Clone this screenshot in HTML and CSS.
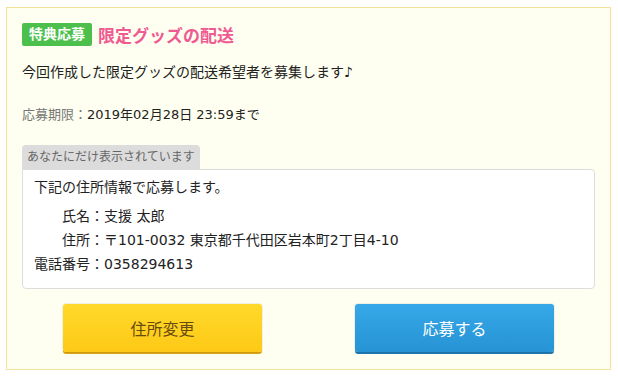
FILE: index.html
```html
<!DOCTYPE html>
<html lang="ja">
<head>
  <meta charset="UTF-8">
  <title>限定グッズの配送</title>
  <link rel="stylesheet" href="styles.css">
</head>
<body>
  <div class="card">
    <div class="head">
      <span class="badge">特典応募</span>
      <h1>限定グッズの配送</h1>
    </div>

    <p class="desc">今回作成した限定グッズの配送希望者を募集します♪</p>

    <p class="deadline"><span class="label">応募期限：</span>2019年02月28日 23:59まで</p>

    <div class="private">
      <div class="tab">あなたにだけ表示されています</div>
      <div class="box">
        <p class="lead">下記の住所情報で応募します。</p>
        <dl class="info">
          <div class="row"><dt>氏名：</dt><dd>支援 太郎</dd></div>
          <div class="row"><dt>住所：</dt><dd>〒101-0032 東京都千代田区岩本町2丁目4-10</dd></div>
          <div class="row"><dt>電話番号：</dt><dd>0358294613</dd></div>
        </dl>
      </div>
    </div>

    <div class="buttons">
      <button class="btn change">住所変更</button>
      <button class="btn apply">応募する</button>
    </div>
  </div>
</body>
</html>
```

FILE: styles.css
```css
* {
  box-sizing: border-box;
  margin: 0;
  padding: 0;
}

body {
  background: #fff;
  padding: 7px 7px 0 6px;
  font-family: "DejaVu Sans", "Noto Sans CJK JP", sans-serif;
  font-size: 14px;
  color: #222;
}

.card {
  background: #fefff0;
  border: 1px solid #f5e29a;
  padding: 15px 15px;
  height: 363px;
}

.head {
  display: flex;
  align-items: center;
  gap: 6px;
  height: 23px;
}

.badge {
  background: #4cbf4c;
  color: #fff;
  font-weight: bold;
  font-size: 14px;
  line-height: 23px;
  padding: 0 7px;
  border-radius: 2px;
}

h1 {
  color: #ef5a92;
  font-size: 17px;
  font-weight: bold;
}

.desc {
  margin-top: 16px;
  line-height: 20px;
}

.deadline {
  margin-top: 23px;
  font-size: 13px;
  line-height: 20px;
}

.deadline .label {
  color: #777;
}

.private {
  margin-top: 20px;
}

.tab {
  display: inline-block;
  background: #dcdcdc;
  color: #666;
  font-size: 12px;
  line-height: 24px;
  padding: 0 5px;
  border-radius: 4px 4px 0 0;
}

.box {
  background: #fff;
  border: 1px solid #ddd;
  border-radius: 0 4px 4px 4px;
  padding: 7px 11px 12px;
}

.lead {
  line-height: 20px;
}

.info {
  margin-top: 7px;
}

.row {
  display: flex;
  line-height: 24px;
}

.row dt {
  width: 70px;
  text-align: right;
}

.buttons {
  display: flex;
  justify-content: center;
  gap: 93px;
  margin-top: 15px;
}

.btn {
  width: 199px;
  height: 48px;
  border: none;
  border-radius: 3px;
  font-family: "Noto Sans CJK JP", sans-serif;
  font-size: 16px;
  cursor: pointer;
}

.change {
  background: linear-gradient(#ffd92a, #fdc916);
  color: #6b4a10;
  box-shadow: 0 0 0 1px rgba(0,0,0,0.06), 0 2px 0 #d9a514;
}

.apply {
  background: linear-gradient(#36a8e8, #2693d4);
  color: #fff;
  box-shadow: 0 0 0 1px rgba(0,0,0,0.06), 0 2px 0 #1f78b0;
}
```
